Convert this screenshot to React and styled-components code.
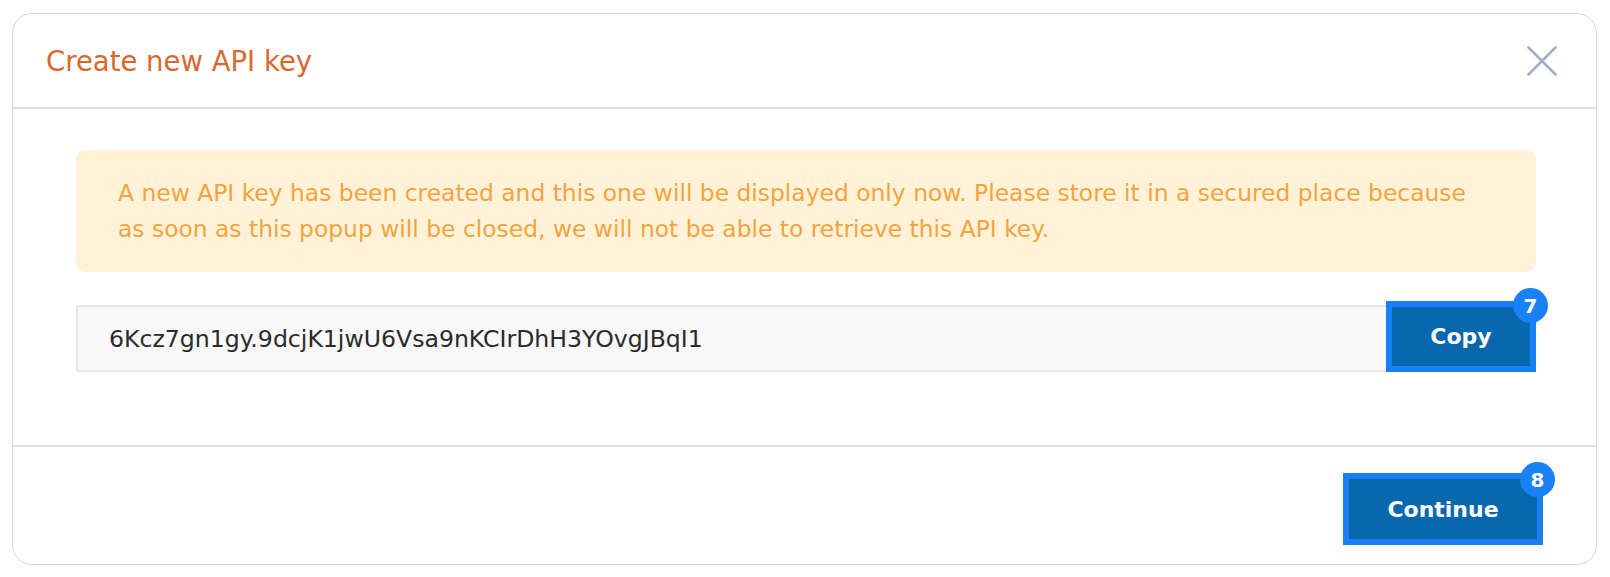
import React from 'react'
import styled, { createGlobalStyle } from 'styled-components'

const GlobalStyle = createGlobalStyle`
    body {
        margin: 0;
        background: #ffffff;
        font-family: "DejaVu Sans", "Noto Sans", sans-serif;
    }
`

const App = () => {
    const apiKey = '6Kcz7gn1gy.9dcjK1jwU6Vsa9nKCIrDhH3YOvgJBqI1'

    return (
        <>
            <GlobalStyle />
            <Page>
                <Dialog>
                    <Header>
                        <Title>Create new API key</Title>
                        <CloseButton aria-label="Close">
                            <svg width="30" height="30" viewBox="0 0 30 30">
                                <path d="M1.5 1.5 L28.5 28.5 M28.5 1.5 L1.5 28.5" stroke="#a5aecb" strokeWidth="2.6" strokeLinecap="round" />
                            </svg>
                        </CloseButton>
                    </Header>
                    <Body>
                        <Alert>
                            A new API key has been created and this one will be displayed only now. Please store it in a secured place because as soon as this popup will be closed, we will not be able to retrieve this API key.
                        </Alert>
                        <KeyRow>
                            <KeyField>{apiKey}</KeyField>
                            <Highlight>
                                <ActionButton>Copy</ActionButton>
                                {/* offsets are from the padding box, inside the 6px outline */}
                                <Badge $top={-19} $right={-18}>7</Badge>
                            </Highlight>
                        </KeyRow>
                    </Body>
                    <Footer>
                        <Highlight $wide>
                            <ActionButton>Continue</ActionButton>
                            <Badge $top={-17} $right={-18}>8</Badge>
                        </Highlight>
                    </Footer>
                </Dialog>
            </Page>
        </>
    )
}

const Page = styled.div`
    padding: 13px 13px 0 12px;
`

const Dialog = styled.div`
    box-sizing: border-box;
    width: 1585px;
    height: 552px;
    border: 1px solid #d6d6d6;
    border-radius: 20px;
    background: #fff;
    display: flex;
    flex-direction: column;
`

const Header = styled.div`
    height: 93px;
    display: flex;
    align-items: center;
    justify-content: space-between;
    padding: 0 39px 0 33px;
    border-bottom: 2px solid #e0e0e0;
`

const Title = styled.h2`
    margin: 0;
    font-weight: 400;
    font-size: 27.5px;
    color: #d9682f;
`

const CloseButton = styled.button`
    border: none;
    background: none;
    padding: 0;
    width: 30px;
    height: 30px;
    cursor: pointer;
`

const Body = styled.div`
    padding: 41px 60px 0 63px;
    height: 338px;
    box-sizing: border-box;
    border-bottom: 2px solid #e0e0e0;
`

const Alert = styled.div`
    background: #fff2d9;
    border-radius: 9px;
    padding: 25px 44px 25px 42px;
    color: #f3a43d;
    font-size: 23.4px;
    line-height: 36px;
`

const KeyRow = styled.div`
    display: flex;
    align-items: flex-end;
    margin-top: 29px;
`

const KeyField = styled.div`
    flex: 1;
    box-sizing: border-box;
    height: 67px;
    display: flex;
    align-items: center;
    padding-left: 31px;
    background: #f8f8f8;
    border: 2px solid #e6e6e6;
    border-right: none;
    border-radius: 3px 0 0 3px;
    color: #2b2b2b;
    font-size: 23.6px;
`

const Highlight = styled.div`
    position: relative;
    box-sizing: border-box;
    width: ${props => props.$wide ? '200px' : '150px'};
    height: ${props => props.$wide ? '72px' : '71px'};
    border: 6px solid #1a7ff4;
    background: #0868ad;
    display: flex;
`

const ActionButton = styled.button`
    flex: 1;
    border: none;
    background: #0868ad;
    color: #fff;
    font-family: inherit;
    font-weight: 700;
    font-size: 22px;
    cursor: pointer;
`

const Badge = styled.span`
    position: absolute;
    top: ${props => props.$top}px;
    right: ${props => props.$right}px;
    width: 35px;
    height: 35px;
    border-radius: 50%;
    background: #1a80f5;
    color: #fff;
    font-weight: 700;
    font-size: 20px;
    display: flex;
    align-items: center;
    justify-content: center;
`

const Footer = styled.div`
    flex: 1;
    display: flex;
    justify-content: flex-end;
    align-items: flex-start;
    padding: 26px 53px 0 0;
`

export default App
